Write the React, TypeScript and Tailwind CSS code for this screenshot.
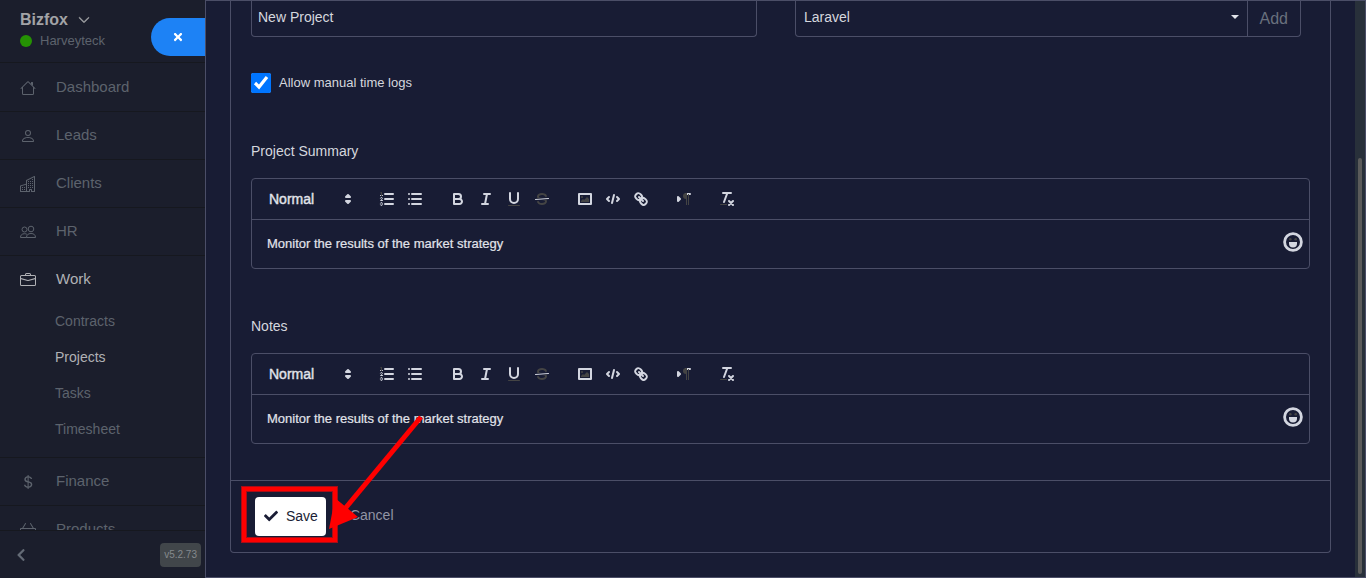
import React from 'react';
import { BsBasket, BsBriefcase, BsChevronDown, BsCurrencyDollar, BsPerson } from 'react-icons/bs';
import { FaCheck, FaChevronLeft, FaTimes } from 'react-icons/fa';

const HouseIcon = () => (
  <svg viewBox="0 0 16 16" className="size-4" fill="currentColor">
    <path d="M2 13.5V7h1v6.5a.5.5 0 0 0 .5.5h9a.5.5 0 0 0 .5-.5V7h1v6.5a1.5 1.5 0 0 1-1.5 1.5h-9A1.5 1.5 0 0 1 2 13.5zm11-11V6l-2-2V2.5a.5.5 0 0 1 .5-.5h1a.5.5 0 0 1 .5.5z" />
    <path d="M7.293 1.5a1 1 0 0 1 1.414 0l6.647 6.646a.5.5 0 0 1-.708.708L8 2.207 1.354 8.854a.5.5 0 1 1-.708-.708L7.293 1.5z" />
  </svg>
);

const BuildingIcon = () => (
  <svg viewBox="0 0 16 16" className="size-4" fill="currentColor">
    <path
      fillRule="evenodd"
      d="M14.763.075A.5.5 0 0 1 15 .5v15a.5.5 0 0 1-.5.5h-3a.5.5 0 0 1-.5-.5V14h-1v1.5a.5.5 0 0 1-.5.5h-9a.5.5 0 0 1-.5-.5V10a.5.5 0 0 1 .342-.474L6 7.64V4.5a.5.5 0 0 1 .276-.447l8-4a.5.5 0 0 1 .487.022zM6 8.694 1 10.36V15h5V8.694zM7 15h2v-1.5a.5.5 0 0 1 .5-.5h2a.5.5 0 0 1 .5.5V15h2V1.309l-7 3.5V15z"
    />
    <path d="M2 11h1v1H2zm2 0h1v1H4zm-2 2h1v1H2zm2 0h1v1H4zm4-4h1v1H8zm2 0h1v1h-1zm-2 2h1v1H8zm2 0h1v1h-1zm2-2h1v1h-1zm0 2h1v1h-1zM8 7h1v1H8zm2 0h1v1h-1zm2 0h1v1h-1zM8 5h1v1H8zm2 0h1v1h-1zm2 0h1v1h-1zm0-2h1v1h-1z" />
  </svg>
);

const PeopleIcon = () => (
  <svg viewBox="0 0 16 16" className="size-4" fill="none" stroke="currentColor">
    <circle cx="4.5" cy="5.5" r="2.5" />
    <circle cx="11" cy="5" r="2.8" />
    <path d="M6.5 13.5h9c0-2.5-1.5-4-4.5-4s-4.500 1.500-4.500 4zM6.500 13.500h-6c0-2.300 1.300-3.800 4-3.800 1 0 1.800.2 2.400.6" />
  </svg>
);

interface NavItemProps {
  icon: React.ReactNode;
  label: string;
  active?: boolean;
  children?: React.ReactNode;
}

const NavItem: React.FC<NavItemProps> = ({ icon, label, active, children }) => (
  <li className="border-b border-[#16181f]">
    <a
      href="#"
      className={`flex h-[47px] items-center gap-5 pl-5 text-[15px] ${active ? 'text-[#b0b1b5]' : 'text-[#5d636d]'}`}
    >
      <span className="flex size-4 items-center justify-center">{icon}</span>
      {label}
    </a>
    {children}
  </li>
);

const workLinks = ['Contracts', 'Projects', 'Tasks', 'Timesheet'];

const Sidebar = () => (
  <aside className="flex h-screen w-[205px] shrink-0 flex-col bg-[#1b1e2c]">
    <header className="flex h-[63px] shrink-0 items-start justify-between border-b border-[#16181f] pl-5">
      <div className="pt-[10px]">
        <button className="flex items-center gap-2.5 text-base leading-5 font-bold text-[#a2a3a6]">
          Bizfox
          <BsChevronDown className="size-3" strokeWidth={1} />
        </button>
        <div className="flex items-center gap-2 text-[13px] leading-[22px] text-[#5d636d]">
          <span className="size-3 rounded-full bg-[#259203]" />
          Harveyteck
        </div>
      </div>
      <button
        aria-label="Close"
        className="mt-[18px] flex h-[38px] w-[54px] items-center justify-center rounded-l-full bg-[#1d82f5] text-white"
      >
        <FaTimes className="size-3" />
      </button>
    </header>

    <nav className="min-h-0 flex-1 overflow-hidden pt-px">
      <ul>
        <NavItem icon={<HouseIcon />} label="Dashboard" />
        <NavItem icon={<BsPerson className="size-4" />} label="Leads" />
        <NavItem icon={<BuildingIcon />} label="Clients" />
        <NavItem icon={<PeopleIcon />} label="HR" />
        <NavItem icon={<BsBriefcase className="size-4" />} label="Work" active>
          <ul className="pb-2.5">
            {workLinks.map((link) => (
              <li key={link}>
                <a
                  href="#"
                  className={`flex h-9 items-center pl-[55px] text-sm ${
                    link === 'Projects' ? 'text-[#b0b1b5]' : 'text-[#5d636d]'
                  }`}
                >
                  {link}
                </a>
              </li>
            ))}
          </ul>
        </NavItem>
        <NavItem icon={<BsCurrencyDollar className="size-4" />} label="Finance" />
        <NavItem icon={<BsBasket className="size-4" />} label="Products" />
      </ul>
    </nav>

    <footer className="flex h-12 shrink-0 items-center justify-between border-t border-[#16181f] pr-1 pl-[14px]">
      <button aria-label="Collapse menu" className="text-[#646b76]">
        <FaChevronLeft className="size-3.5" />
      </button>
      <span className="rounded bg-[#41464a] px-1 text-[10px] leading-6 text-[#858a8d]">v5.2.73</span>
    </footer>
  </aside>
);

interface ToolProps {
  label: string;
  children: React.ReactNode;
}

const Tool: React.FC<ToolProps> = ({ label, children }) => (
  <button type="button" aria-label={label} className="h-6 w-7 px-[5px] py-[3px] text-[#d3d6e0]">
    <svg
      viewBox="0 0 18 18"
      className="size-[18px]"
      fill="none"
      stroke="currentColor"
      strokeWidth="2"
      strokeLinecap="round"
      strokeLinejoin="round"
    >
      {children}
    </svg>
  </button>
);

// Parts of the toolbar icons that stay dark on the dark theme
const Dim: React.FC<{ children: React.ReactNode }> = ({ children }) => (
  <g fill="#444444" stroke="none">
    {children}
  </g>
);

const Toolbar = () => (
  <div className="flex flex-wrap gap-x-[15px] p-2">
    <button type="button" className="flex h-6 w-[98px] items-center justify-between pl-[9px] text-sm text-[#e1e3ea]">
      <span className="[-webkit-text-stroke:0.4px]">Normal</span>
      <svg
        viewBox="0 0 18 18"
        className="mr-px size-[18px]"
        fill="#d3d6e0"
        stroke="#d3d6e0"
        strokeWidth="2"
        strokeLinejoin="round"
      >
        <polygon points="7 11 9 13 11 11 7 11" />
        <polygon points="7 7 9 5 11 7 7 7" />
      </svg>
    </button>
    <div className="flex">
      <Tool label="Numbered list">
        <path d="M7 4H15M7 9H15M7 14H15" />
        <path
          strokeWidth="1"
          d="M2.5 5.500H4.500M4.500,10.500h-2c0-.234,1.850-1.076,1.850-2.234A0.959,0.959,0,0,0,2.500,8.156M2.500,14.846a0.959,0.959,0,0,0,1.850-.11A0.700,0.700,0,0,0,3.750,14a0.688,0.688,0,0,0,.6-0.736,0.959,0.959,0,0,0-1.850-.109"
        />
        <Dim>
          <path d="M3.500,6A0.500,0.500,0,0,1,3,5.500V3.085l-0.276.138A0.500,0.500,0,0,1,2.053,3c-0.124-.247-0.023-0.324.224-0.447l1-.5A0.500,0.500,0,0,1,4,2.500v3A0.500,0.500,0,0,1,3.500,6Z" />
        </Dim>
      </Tool>
      <Tool label="Bullet list">
        <path d="M6 4H15M6 9H15M6 14H15M3 4H3M3 9H3M3 14H3" />
      </Tool>
    </div>
    <div className="flex">
      <Tool label="Bold">
        <path d="M5,4H9.500A2.500,2.500,0,0,1,12,6.500v0A2.500,2.500,0,0,1,9.500,9H5V4Z" />
        <path d="M5,9h5.500A2.500,2.500,0,0,1,13,11.500v0A2.500,2.500,0,0,1,10.500,14H5V9Z" />
      </Tool>
      <Tool label="Italic">
        <path d="M7 4H13M5 14H11M8 14L10 4" />
      </Tool>
      <Tool label="Underline">
        <path d="M5,3V9a4.012,4.012,0,0,0,4,4H9a4.012,4.012,0,0,0,4-4V3" />
        <Dim>
          <rect x="3" y="15" width="12" height="1" rx="0.500" />
        </Dim>
      </Tool>
      <Tool label="Strikethrough">
        <path strokeWidth="1" d="M15.500 8.500L2.500 9.500" />
        <Dim>
          <path d="M9.007,8C6.542,7.791,6,7.519,6,6.500,6,5.792,7.283,5,9,5c1.571,0,2.765.679,2.969,1.309a1,1,0,0,0,1.900-.617C13.356,4.106,11.354,3,9,3,6.200,3,4,4.538,4,6.500a3.200,3.200,0,0,0,.5,1.843Z" />
          <path d="M8.984,10C11.457,10.208,12,10.479,12,11.500c0,0.708-1.283,1.500-3,1.500-1.571,0-2.765-.679-2.969-1.309a1,1,0,1,0-1.900.617C4.644,13.894,6.646,15,9,15c2.800,0,5-1.538,5-3.500a3.200,3.200,0,0,0-.5-1.843Z" />
        </Dim>
      </Tool>
    </div>
    <div className="flex">
      <Tool label="Image">
        <rect x="3" y="4" width="12" height="10" />
        <Dim>
          <circle cx="6" cy="7" r="1" />
          <polyline points="5 12 5 11 7 9 8 10 11 7 13 9 13 12 5 12" />
        </Dim>
      </Tool>
      <Tool label="Code block">
        <path d="M5 7L3 9L5 11M13 7L15 9L13 11M10 5L8 13" />
      </Tool>
      <Tool label="Link">
        <path d="M7 7L11 11" />
        <path d="M8.900,4.577a3.476,3.476,0,0,1,.36,4.679A3.476,3.476,0,0,1,4.577,8.900C3.185,7.500,2.035,6.400,4.217,4.217S7.500,3.185,8.900,4.577Z" />
        <path d="M13.423,9.100a3.476,3.476,0,0,0-4.679-.36,3.476,3.476,0,0,0,.36,4.679c1.392,1.392,2.500,2.542,4.679.36S14.815,10.500,13.423,9.100Z" />
      </Tool>
    </div>
    <Tool label="Text direction">
      <polygon points="3 11 5 9 3 7 3 11" fill="currentColor" />
      <path d="M15 4H11" />
      <Dim>
        <path d="M11,3a3,3,0,0,0,0,6h1V3H11Z" />
        <rect x="11" y="4" width="1" height="11" />
        <rect x="13" y="4" width="1" height="11" />
      </Dim>
    </Tool>
    <Tool label="Clear formatting">
      <path d="M5 3H13M6 12L9.350 3M11 11L15 15M15 11L11 15" />
      <Dim>
        <rect x="2" y="14" width="7" height="1" rx="0.500" />
      </Dim>
    </Tool>
  </div>
);

const EmojiIcon = () => (
  <svg viewBox="0 0 20 20" className="size-5" fill="none">
    <circle cx="10" cy="10" r="8.400" stroke="#d3d6e0" strokeWidth="2.800" />
    <circle cx="7.300" cy="7.300" r="1.300" fill="#444444" />
    <circle cx="12.700" cy="7.300" r="1.300" fill="#444444" />
    <path d="M6 10h8v1.500a4 4 0 0 1-8 0z" fill="#d3d6e0" />
  </svg>
);

interface EditorProps {
  id: string;
  label: string;
  value: string;
}

const Editor: React.FC<EditorProps> = ({ id, label, value }) => (
  <div>
    <label htmlFor={id} className="mb-[17px] block text-sm leading-5 text-[#d5d7de]">
      {label}
    </label>
    <div className="rounded border border-[#4b4e67]">
      <Toolbar />
      <div className="flex h-[49px] items-center border-t border-[#4b4e67] pr-1.5 pb-0.5 pl-[15px]">
        <input
          id={id}
          defaultValue={value}
          className="h-5 min-w-0 flex-1 bg-transparent text-[13px] text-[#e1e3ea] outline-none [-webkit-text-stroke:0.2px]"
        />
        <button type="button" aria-label="Insert emoji" className="mb-0.5">
          <EmojiIcon />
        </button>
      </div>
    </div>
  </div>
);

// Marks the Save button
const Callout = () => (
  <svg className="pointer-events-none absolute bottom-[9px] left-[10px] h-[129px] w-[186px]" viewBox="0 0 186 129" fill="none">
    <rect x="3" y="75" width="91" height="51" stroke="#a50d18" strokeWidth="6" />
    <rect x="3" y="75" width="91" height="51" stroke="#ff0000" strokeWidth="4" />
    <path d="M180 3L102 97" stroke="#ff0000" strokeWidth="5" />
    <path d="M88 115L94 84L117 103Z" fill="#ff0000" />
  </svg>
);

export default function App() {
  return (
    <div className="flex h-screen bg-[#181c34] font-['Liberation_Sans',Arial,sans-serif]">
      <Sidebar />
      <div className="flex min-w-0 flex-1 border border-[#4b4e67]">
        <main className="min-w-0 flex-1 px-6">
          <form className="rounded-b border border-t-0 border-[#4b4e67]" onSubmit={(e) => e.preventDefault()}>
            <div className="px-5 pb-9">
              <div className="grid grid-cols-2 gap-[38px] pr-[9px]">
                <input
                  aria-label="Project name"
                  defaultValue="New Project"
                  className="h-9 min-w-0 rounded-b border border-t-0 border-[#4b4e67] bg-transparent px-1.5 pb-1 text-sm text-[#d5d7de] outline-none"
                />
                <div className="flex h-9 rounded-b border border-t-0 border-[#4b4e67]">
                  <div className="relative flex-1">
                    <select
                      aria-label="Project category"
                      className="h-full w-full appearance-none bg-transparent px-2 pb-1 text-sm text-[#d5d7de] outline-none"
                    >
                      <option>Laravel</option>
                    </select>
                    <span className="pointer-events-none absolute top-[14px] right-2 border-x-4 border-t-4 border-x-transparent border-t-[#e1e3ea]" />
                  </div>
                  <button type="button" className="border-l border-[#4b4e67] px-3 text-base text-[#69707d]">
                    Add
                  </button>
                </div>
              </div>

              <label className="mt-9 flex items-center gap-2 text-[13px] leading-5 text-[#d5d7de]">
                <input type="checkbox" defaultChecked className="size-5 accent-[#0075ff]" />
                Allow manual time logs
              </label>

              <div className="mt-12 flex flex-col gap-[47px]">
                <Editor id="summary" label="Project Summary" value="Monitor the results of the market strategy" />
                <Editor id="notes" label="Notes" value="Monitor the results of the market strategy" />
              </div>
            </div>

            <div className="relative flex items-center gap-6 border-t border-[#4b4e67] px-6 py-4">
              <button className="flex h-[39px] items-center gap-2 rounded bg-white pr-2 pb-0.5 pl-[9px] text-sm text-[#1a1d35]">
                <FaCheck className="size-3.5" />
                Save
              </button>
              <button type="button" className="pb-1 text-sm text-[#9295a5]">
                Cancel
              </button>
              <Callout />
            </div>
          </form>
        </main>
        <div className="flex w-[10px] justify-center bg-[#28303a] pt-[157px] pb-[3px]">
          <div className="w-1 rounded-full bg-[#5b5b5b]" />
        </div>
      </div>
    </div>
  );
}
